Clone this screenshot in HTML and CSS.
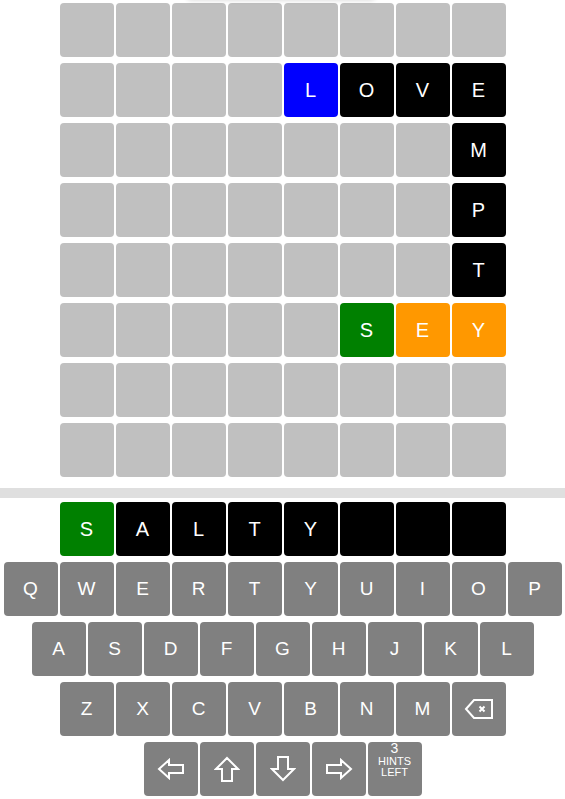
FILE: index.html
```html
<!DOCTYPE html>
<html lang="en">
<head>
<meta charset="utf-8">
<title>Word grid</title>
<link rel="stylesheet" href="styles.css">
</head>
<body>
<div class="toast-shadow"></div>
<main class="game">
  <section class="board">
    <div class="row"><div class="tile"></div><div class="tile"></div><div class="tile"></div><div class="tile"></div><div class="tile"></div><div class="tile"></div><div class="tile"></div><div class="tile"></div></div>
    <div class="row"><div class="tile"></div><div class="tile"></div><div class="tile"></div><div class="tile"></div><div class="tile blue">L</div><div class="tile black">O</div><div class="tile black">V</div><div class="tile black">E</div></div>
    <div class="row"><div class="tile"></div><div class="tile"></div><div class="tile"></div><div class="tile"></div><div class="tile"></div><div class="tile"></div><div class="tile"></div><div class="tile black">M</div></div>
    <div class="row"><div class="tile"></div><div class="tile"></div><div class="tile"></div><div class="tile"></div><div class="tile"></div><div class="tile"></div><div class="tile"></div><div class="tile black">P</div></div>
    <div class="row"><div class="tile"></div><div class="tile"></div><div class="tile"></div><div class="tile"></div><div class="tile"></div><div class="tile"></div><div class="tile"></div><div class="tile black">T</div></div>
    <div class="row"><div class="tile"></div><div class="tile"></div><div class="tile"></div><div class="tile"></div><div class="tile"></div><div class="tile green">S</div><div class="tile orange">E</div><div class="tile orange">Y</div></div>
    <div class="row"><div class="tile"></div><div class="tile"></div><div class="tile"></div><div class="tile"></div><div class="tile"></div><div class="tile"></div><div class="tile"></div><div class="tile"></div></div>
    <div class="row"><div class="tile"></div><div class="tile"></div><div class="tile"></div><div class="tile"></div><div class="tile"></div><div class="tile"></div><div class="tile"></div><div class="tile"></div></div>
  </section>

  <div class="divider"></div>

  <section class="entry">
    <div class="row"><div class="tile green">S</div><div class="tile black">A</div><div class="tile black">L</div><div class="tile black">T</div><div class="tile black">Y</div><div class="tile black"></div><div class="tile black"></div><div class="tile black"></div></div>
  </section>

  <section class="keyboard">
    <div class="row">
      <button class="key">Q</button><button class="key">W</button><button class="key">E</button><button class="key">R</button><button class="key">T</button><button class="key">Y</button><button class="key">U</button><button class="key">I</button><button class="key">O</button><button class="key">P</button>
    </div>
    <div class="row">
      <button class="key">A</button><button class="key">S</button><button class="key">D</button><button class="key">F</button><button class="key">G</button><button class="key">H</button><button class="key">J</button><button class="key">K</button><button class="key">L</button>
    </div>
    <div class="row">
      <button class="key">Z</button><button class="key">X</button><button class="key">C</button><button class="key">V</button><button class="key">B</button><button class="key">N</button><button class="key">M</button>
      <button class="key" aria-label="Backspace">
        <svg class="icon" width="30" height="24" viewBox="0 0 30 24"><path d="M2 12 L10 3 H28 V21 H10 Z" fill="none" stroke="#fff" stroke-width="2" stroke-linejoin="miter"/><path d="M15.5 9.5 L20.5 14.5 M20.5 9.5 L15.5 14.5" stroke="#fff" stroke-width="2"/></svg>
      </button>
    </div>
    <div class="row">
      <button class="key" aria-label="Left">
        <svg class="icon" width="28" height="22" viewBox="0 0 28 22"><path d="M2 11 L12 2 V7 H26 V15 H12 V20 Z" fill="none" stroke="#fff" stroke-width="2" stroke-linejoin="miter"/></svg>
      </button>
      <button class="key" aria-label="Up">
        <svg class="icon" width="26" height="26" viewBox="0 0 26 26"><path d="M13 2 L24 13 H18 V25 H8 V13 H2 Z" fill="none" stroke="#fff" stroke-width="2" stroke-linejoin="miter"/></svg>
      </button>
      <button class="key" aria-label="Down">
        <svg class="icon" width="26" height="26" viewBox="0 0 26 26"><path d="M13 24 L24 13 H18 V1 H8 V13 H2 Z" fill="none" stroke="#fff" stroke-width="2" stroke-linejoin="miter"/></svg>
      </button>
      <button class="key" aria-label="Right">
        <svg class="icon" width="28" height="22" viewBox="0 0 28 22"><path d="M26 11 L16 2 V7 H2 V15 H16 V20 Z" fill="none" stroke="#fff" stroke-width="2" stroke-linejoin="miter"/></svg>
      </button>
      <button class="key hints"><span class="hint-num">3</span><span class="hint-label">HINTS<br>LEFT</span></button>
    </div>
  </section>
</main>
</body>
</html>
```
FILE: styles.css
```css
* { box-sizing: border-box; }

html, body {
  margin: 0;
  padding: 0;
  background: #fff;
  font-family: "Liberation Sans", Arial, sans-serif;
  overflow: hidden;
}

.toast-shadow {
  position: absolute;
  left: 186px;
  top: -40px;
  width: 190px;
  height: 40px;
  background: #fff;
  border-radius: 6px;
  box-shadow: 0 1px 4px rgba(0, 0, 0, 0.12);
}

.game {
  display: flex;
  flex-direction: column;
}

.row {
  display: flex;
  justify-content: center;
}

.tile {
  width: 54px;
  height: 54px;
  margin: 3px 1px;
  border-radius: 4px;
  background: #c0c0c0;
  color: #fff;
  font-size: 20px;
  display: flex;
  align-items: center;
  justify-content: center;
}

.tile.blue { background: #0000ff; }
.tile.black { background: #000; }
.tile.green { background: #008000; }
.tile.orange { background: #ff9800; }

.divider {
  height: 10px;
  margin: 8px 0 1px;
  background: #dfdfdf;
}

.key {
  width: 54px;
  height: 54px;
  margin: 3px 1px;
  padding: 0;
  border: none;
  border-radius: 4px;
  background: #808080;
  color: #fff;
  font-family: "Liberation Sans", Arial, sans-serif;
  font-size: 19px;
  display: flex;
  align-items: center;
  justify-content: center;
}

.icon { display: block; }

.key.hints {
  flex-direction: column;
  justify-content: flex-start;
  padding-top: 0;
}

.hint-num {
  font-size: 14px;
  line-height: 13px;
}

.hint-label {
  margin-top: 1px;
  font-size: 11px;
  line-height: 10.5px;
}
```
